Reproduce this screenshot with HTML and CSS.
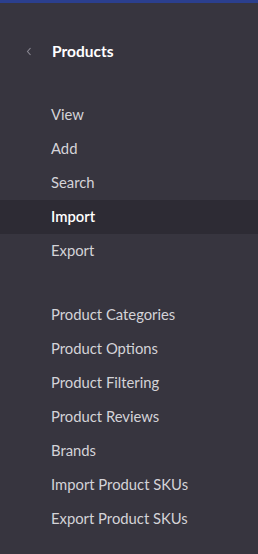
FILE: index.html
```html
<!DOCTYPE html>
<html lang="en">

<head>
  <meta charset="UTF-8">
  <meta name="viewport" content="width=device-width, initial-scale=1.0">
  <title>Products menu</title>
  <link rel="stylesheet" href="styles.css">
</head>

<body>
  <nav class="sidebar">
    <div class="side_head">
      <span class="back">
        <svg width="6" height="9" viewBox="0 0 6 9"><path d="M4.5 1 L1.5 4.5 L4.5 8" fill="none" stroke="#8a8893" stroke-width="1.1"/></svg>
      </span>
      <h2 class="side_title">Products</h2>
    </div>

    <ul class="menu">
      <li class="menu_item">View</li>
      <li class="menu_item">Add</li>
      <li class="menu_item">Search</li>
      <li class="menu_item active">Import</li>
      <li class="menu_item">Export</li>
    </ul>

    <ul class="menu">
      <li class="menu_item">Product Categories</li>
      <li class="menu_item">Product Options</li>
      <li class="menu_item">Product Filtering</li>
      <li class="menu_item">Product Reviews</li>
      <li class="menu_item">Brands</li>
      <li class="menu_item">Import Product SKUs</li>
      <li class="menu_item">Export Product SKUs</li>
    </ul>
  </nav>
</body>

</html>
```

FILE: styles.css
```css
* {
  margin: 0;
  padding: 0;
  box-sizing: border-box;
}

html,
body {
  height: 100%;
}

body {
  background: #37353f;
  font-family: Lato, "Noto Sans", sans-serif;
}

.sidebar {
  min-height: 100%;
  border-top: 3px solid #2b3f8e;
  padding-top: 30px;
}

.side_head {
  display: flex;
  align-items: center;
  height: 36px;
  padding-left: 26px;
}

.back {
  display: flex;
  width: 26px;
}

.side_title {
  color: #fff;
  font-size: 15.5px;
  font-weight: bold;
}

.menu {
  list-style: none;
  margin-top: 29px;
}

.menu+.menu {
  margin-top: 30px;
}

.menu_item {
  height: 34px;
  line-height: 32px;
  padding-left: 51px;
  padding-bottom: 2px;
  color: #d4d3d8;
  font-size: 14.8px;
  cursor: pointer;
}

.menu_item.active {
  background: #2d2b34;
  color: #fff;
  font-weight: 600;
}
```
